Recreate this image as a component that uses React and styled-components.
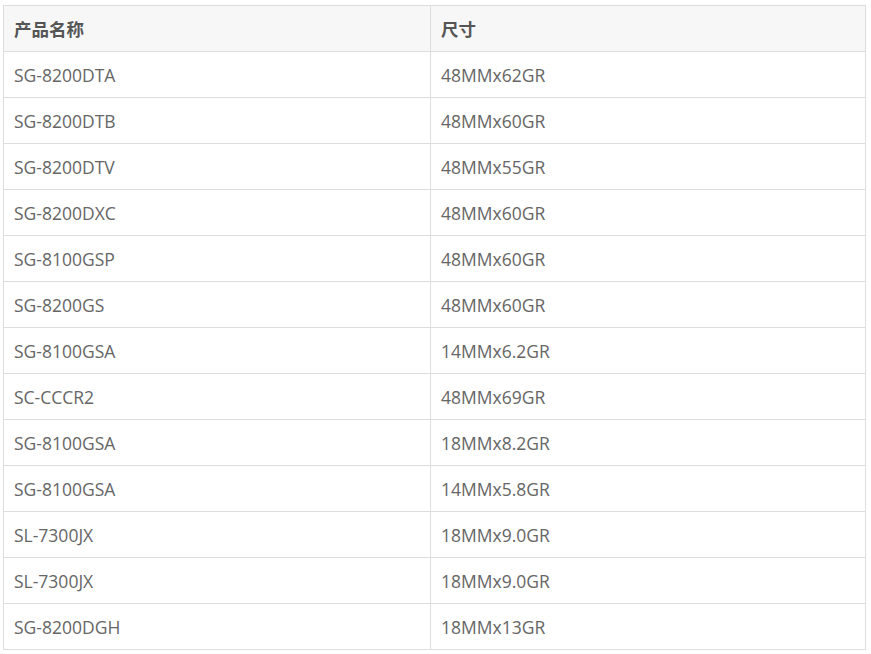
import styled, { createGlobalStyle } from "styled-components";

const GlobalStyle = createGlobalStyle`
  body {
    margin: 0;
    background: #fff;
    font-family: "Open Sans", "Noto Sans CJK SC", sans-serif;
  }
`;

const rows = [
  ["SG-8200DTA", "48MMx62GR"],
  ["SG-8200DTB", "48MMx60GR"],
  ["SG-8200DTV", "48MMx55GR"],
  ["SG-8200DXC", "48MMx60GR"],
  ["SG-8100GSP", "48MMx60GR"],
  ["SG-8200GS", "48MMx60GR"],
  ["SG-8100GSA", "14MMx6.2GR"],
  ["SC-CCCR2", "48MMx69GR"],
  ["SG-8100GSA", "18MMx8.2GR"],
  ["SG-8100GSA", "14MMx5.8GR"],
  ["SL-7300JX", "18MMx9.0GR"],
  ["SL-7300JX", "18MMx9.0GR"],
  ["SG-8200DGH", "18MMx13GR"],
];

const Wrap = styled.div`
  padding: 5px 5px 0 3px;
`;

const Table = styled.table`
  width: 863px;
  border-collapse: collapse;
  table-layout: fixed;
`;

const Head = styled.th`
  height: 46px;
  padding: 0 10px;
  box-sizing: border-box;
  text-align: left;
  font-size: 17.5px;
  font-weight: 700;
  color: #555;
  background: #f7f7f7;
  border: 1px solid #ddd;
  width: ${(p) => p.$w || "auto"};
`;

const Cell = styled.td`
  height: 46px;
  padding: 0 10px;
  box-sizing: border-box;
  font-size: 17.5px;
  color: #666;
  border: 1px solid #ddd;
`;

export default function App() {
  return (
    <Wrap>
      <GlobalStyle />
      <Table>
        <thead>
          <tr>
            <Head $w="427px">产品名称</Head>
            <Head>尺寸</Head>
          </tr>
        </thead>
        <tbody>
          {rows.map(([name, size], i) => (
            <tr key={i}>
              <Cell>{name}</Cell>
              <Cell>{size}</Cell>
            </tr>
          ))}
        </tbody>
      </Table>
    </Wrap>
  );
}
